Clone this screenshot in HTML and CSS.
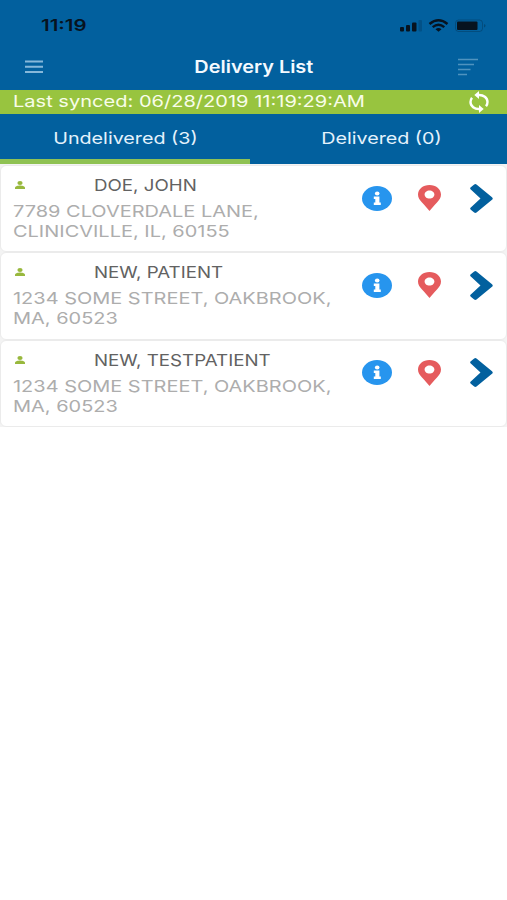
FILE: index.html
```html
<!DOCTYPE html>
<html lang="en">
<head>
<meta charset="utf-8">
<title>Delivery List</title>
<link rel="stylesheet" href="styles.css">
</head>
<body>
<svg class="defs" aria-hidden="true">
  <symbol id="person" viewBox="0 0 10 8"><ellipse cx="5" cy="2" rx="2.6" ry="2"/><path d="M0 8V7C0 5.400 3 4.600 5 4.600s5 .8 5 2.400v1z"/></symbol>
  <symbol id="info" viewBox="0 0 30 25"><ellipse cx="15" cy="12.500" rx="15" ry="12.500" fill="#2795ee"/><ellipse cx="15.200" cy="7.500" rx="2.300" ry="1.900" fill="#fff"/><path d="M11.800 10.500h5.600v6h1.400v2.400h-7v-2.400h1.500v-3.600h-1.500z" fill="#fff"/></symbol>
  <symbol id="pin" viewBox="0 0 23 26"><path fill-rule="evenodd" d="M11.500 0C5 0 0 4.200 0 9.600c0 3.300 1.600 5.200 4 7.800 3 3.200 5.300 5.600 7.500 8.600 2.200-3 4.500-5.400 7.500-8.600 2.400-2.600 4-4.500 4-7.800C23 4.200 18 0 11.500 0zm0 5.400c2.700 0 4.900 1.800 4.900 4.100s-2.200 4.100-4.900 4.100-4.900-1.800-4.900-4.100 2.200-4.100 4.900-4.100z"/></symbol>
  <symbol id="next" viewBox="0 0 23 29"><path d="M6.500.5 22 13.200q1.500 1.300 0 2.600L6.500 28.500q-1.200.8-2.300 0L.8 25.800q-1.300-1.200 0-2.400L10.500 14.500.8 5.600q-1.300-1.200 0-2.400L4.200.5q1.100-.8 2.300 0z"/></symbol>
</svg>
<header class="top">
  <div class="status">
    <span class="time t">11:19</span>
    <svg class="signals" viewBox="0 0 86 14" width="86" height="14">
      <rect x="0" y="8" width="4" height="4.500" rx="1"/><rect x="6" y="6" width="4" height="6.500" rx="1"/><rect x="12" y="3.500" width="4.500" height="9" rx="1"/><rect x="18.500" y="1" width="3.500" height="11.500" rx="1" opacity=".18"/>
      <g fill="none" stroke="#07131f" stroke-width="2.400"><path d="M29.500 5Q38.500-2.500 47.500 5M32.700 8.200q5.800-4.800 11.600 0"/></g><path d="M35.500 10.200q3-2.300 6 0L38.500 12.700z"/>
      <rect x="55.500" y="1" width="27" height="11.500" rx="3" fill="none" stroke="#07131f" opacity=".25"/><rect x="57" y="2.500" width="20.500" height="8.500" rx="1"/><path d="M84 5q3 1.700 0 3.500z" opacity=".3"/>
    </svg>
  </div>
  <div class="nav">
    <svg class="menu" viewBox="0 0 18 14" width="18" height="14"><path d="M0 1.500h18M0 6.700h18M0 12h18"/></svg>
    <h1 class="title t">Delivery List</h1>
    <svg class="sort" viewBox="0 0 20 18" width="20" height="18"><path d="M0 1.500h20M0 6.500h16M0 11.500h12.500M0 16.500h9"/></svg>
  </div>
</header>
<div class="sync">
  <span class="synced t">Last synced: 06/28/2019 11:19:29:AM</span>
  <svg class="refresh" viewBox="0 0 22 22" width="22" height="22"><g fill="none" stroke="#fff" stroke-width="2.400"><path d="M10 4c5.500-.6 9.500 3 9.500 7 0 1.600-.5 3-1.500 4.300M12 18c-5.500.6-9.500-3-9.500-7 0-1.600.5-3 1.500-4.300"/></g><path d="M11 0v8L6.300 4zM11 14v8l4.700-4z" fill="#fff"/></svg>
</div>
<nav class="tabs">
  <div class="tab active"><span class="t">Undelivered (3)</span></div>
  <div class="tab"><span class="t">Delivered (0)</span></div>
</nav>
<main class="list">
  <article class="card">
    <div class="details"><div class="head"><svg class="person"><use href="#person"/></svg><span class="name t">DOE, JOHN</span></div>
    <p class="address t">7789 CLOVERDALE LANE,<br>CLINICVILLE, IL, 60155</p></div>
    <div class="actions"><svg class="info"><use href="#info"/></svg><svg class="pin"><use href="#pin"/></svg><svg class="next"><use href="#next"/></svg></div>
  </article>
  <article class="card">
    <div class="details"><div class="head"><svg class="person"><use href="#person"/></svg><span class="name t">NEW, PATIENT</span></div>
    <p class="address t">1234 SOME STREET, OAKBROOK,<br>MA, 60523</p></div>
    <div class="actions"><svg class="info"><use href="#info"/></svg><svg class="pin"><use href="#pin"/></svg><svg class="next"><use href="#next"/></svg></div>
  </article>
  <article class="card">
    <div class="details"><div class="head"><svg class="person"><use href="#person"/></svg><span class="name t">NEW, TESTPATIENT</span></div>
    <p class="address t">1234 SOME STREET, OAKBROOK,<br>MA, 60523</p></div>
    <div class="actions"><svg class="info"><use href="#info"/></svg><svg class="pin"><use href="#pin"/></svg><svg class="next"><use href="#next"/></svg></div>
  </article>
</main>
</body>
</html>
```
FILE: styles.css
```css
* { box-sizing: border-box; }
body { margin: 0; background: #fff; font-family: Inter, "Liberation Sans", sans-serif; font-size: 16.5px; }
.defs { position: absolute; width: 0; height: 0; }
svg { flex: none; display: block; }
.t { display: block; flex: none; white-space: nowrap; transform: scaleX(1.21); transform-origin: left center; }
.top { height: 89.500px; background: #02609e; }
.status { height: 45px; padding: 6px 21px 0 41px; display: flex; align-items: center; justify-content: space-between; }
.time { color: #07131f; font-size: 15.5px; font-weight: 600; transform: scaleX(1.32); }
.signals { fill: #07131f; }
.nav { height: 43px; padding: 0 29px 0 25px; display: flex; align-items: center; justify-content: space-between; }
.menu { fill: none; stroke: #86b8da; stroke-width: 2; }
.title { margin: 0 0 0 6px; font-size: 17px; font-weight: 600; color: #f4faff; transform: scaleX(1.17); transform-origin: center; }
.sort { fill: none; stroke: #4f93bf; stroke-width: 1.600; }
.sync { height: 24.500px; background: #98c43f; padding: 0 17px 0 13px; display: flex; align-items: center; justify-content: space-between; color: #f8fde9; }
.synced { transform: scaleX(1.215); margin-top: -2px; }
.tabs { height: 50px; background: #02609e; display: grid; grid-template-columns: 250px 257px; color: #e4f2fc; }
.tab { display: flex; justify-content: center; align-items: center; border-bottom: 5px solid transparent; padding-top: 3px; }
.tab .t { transform: scaleX(1.195); transform-origin: center; }
.tab:last-child { padding-left: 6px; }
.active { border-color: #8fc253; }
.list { padding-top: 1px; background: #f3f3f3; }
.card { height: 87.300px; background: #fff; border: 1px solid #ebebeb; border-radius: 6px; display: flex; justify-content: space-between; padding: 9px 13px 0 12px; }
.details { width: 330px; }
.head { display: flex; align-items: center; height: 20px; }
.person { width: 10px; height: 8px; margin: 0 69px 0 2px; fill: #98b83d; }
.name { color: #626262; transform: scaleX(1.135); }
.address { margin: 6px 0 0; width: 270px; line-height: 20px; color: #adadad; }
.actions { display: flex; align-items: center; height: 46px; }
.info { width: 30px; height: 25px; margin-right: 26px; }
.pin { width: 23px; height: 26px; margin-right: 29px; fill: #e55b5d; }
.next { width: 23px; height: 29px; fill: #02609e; }
```
